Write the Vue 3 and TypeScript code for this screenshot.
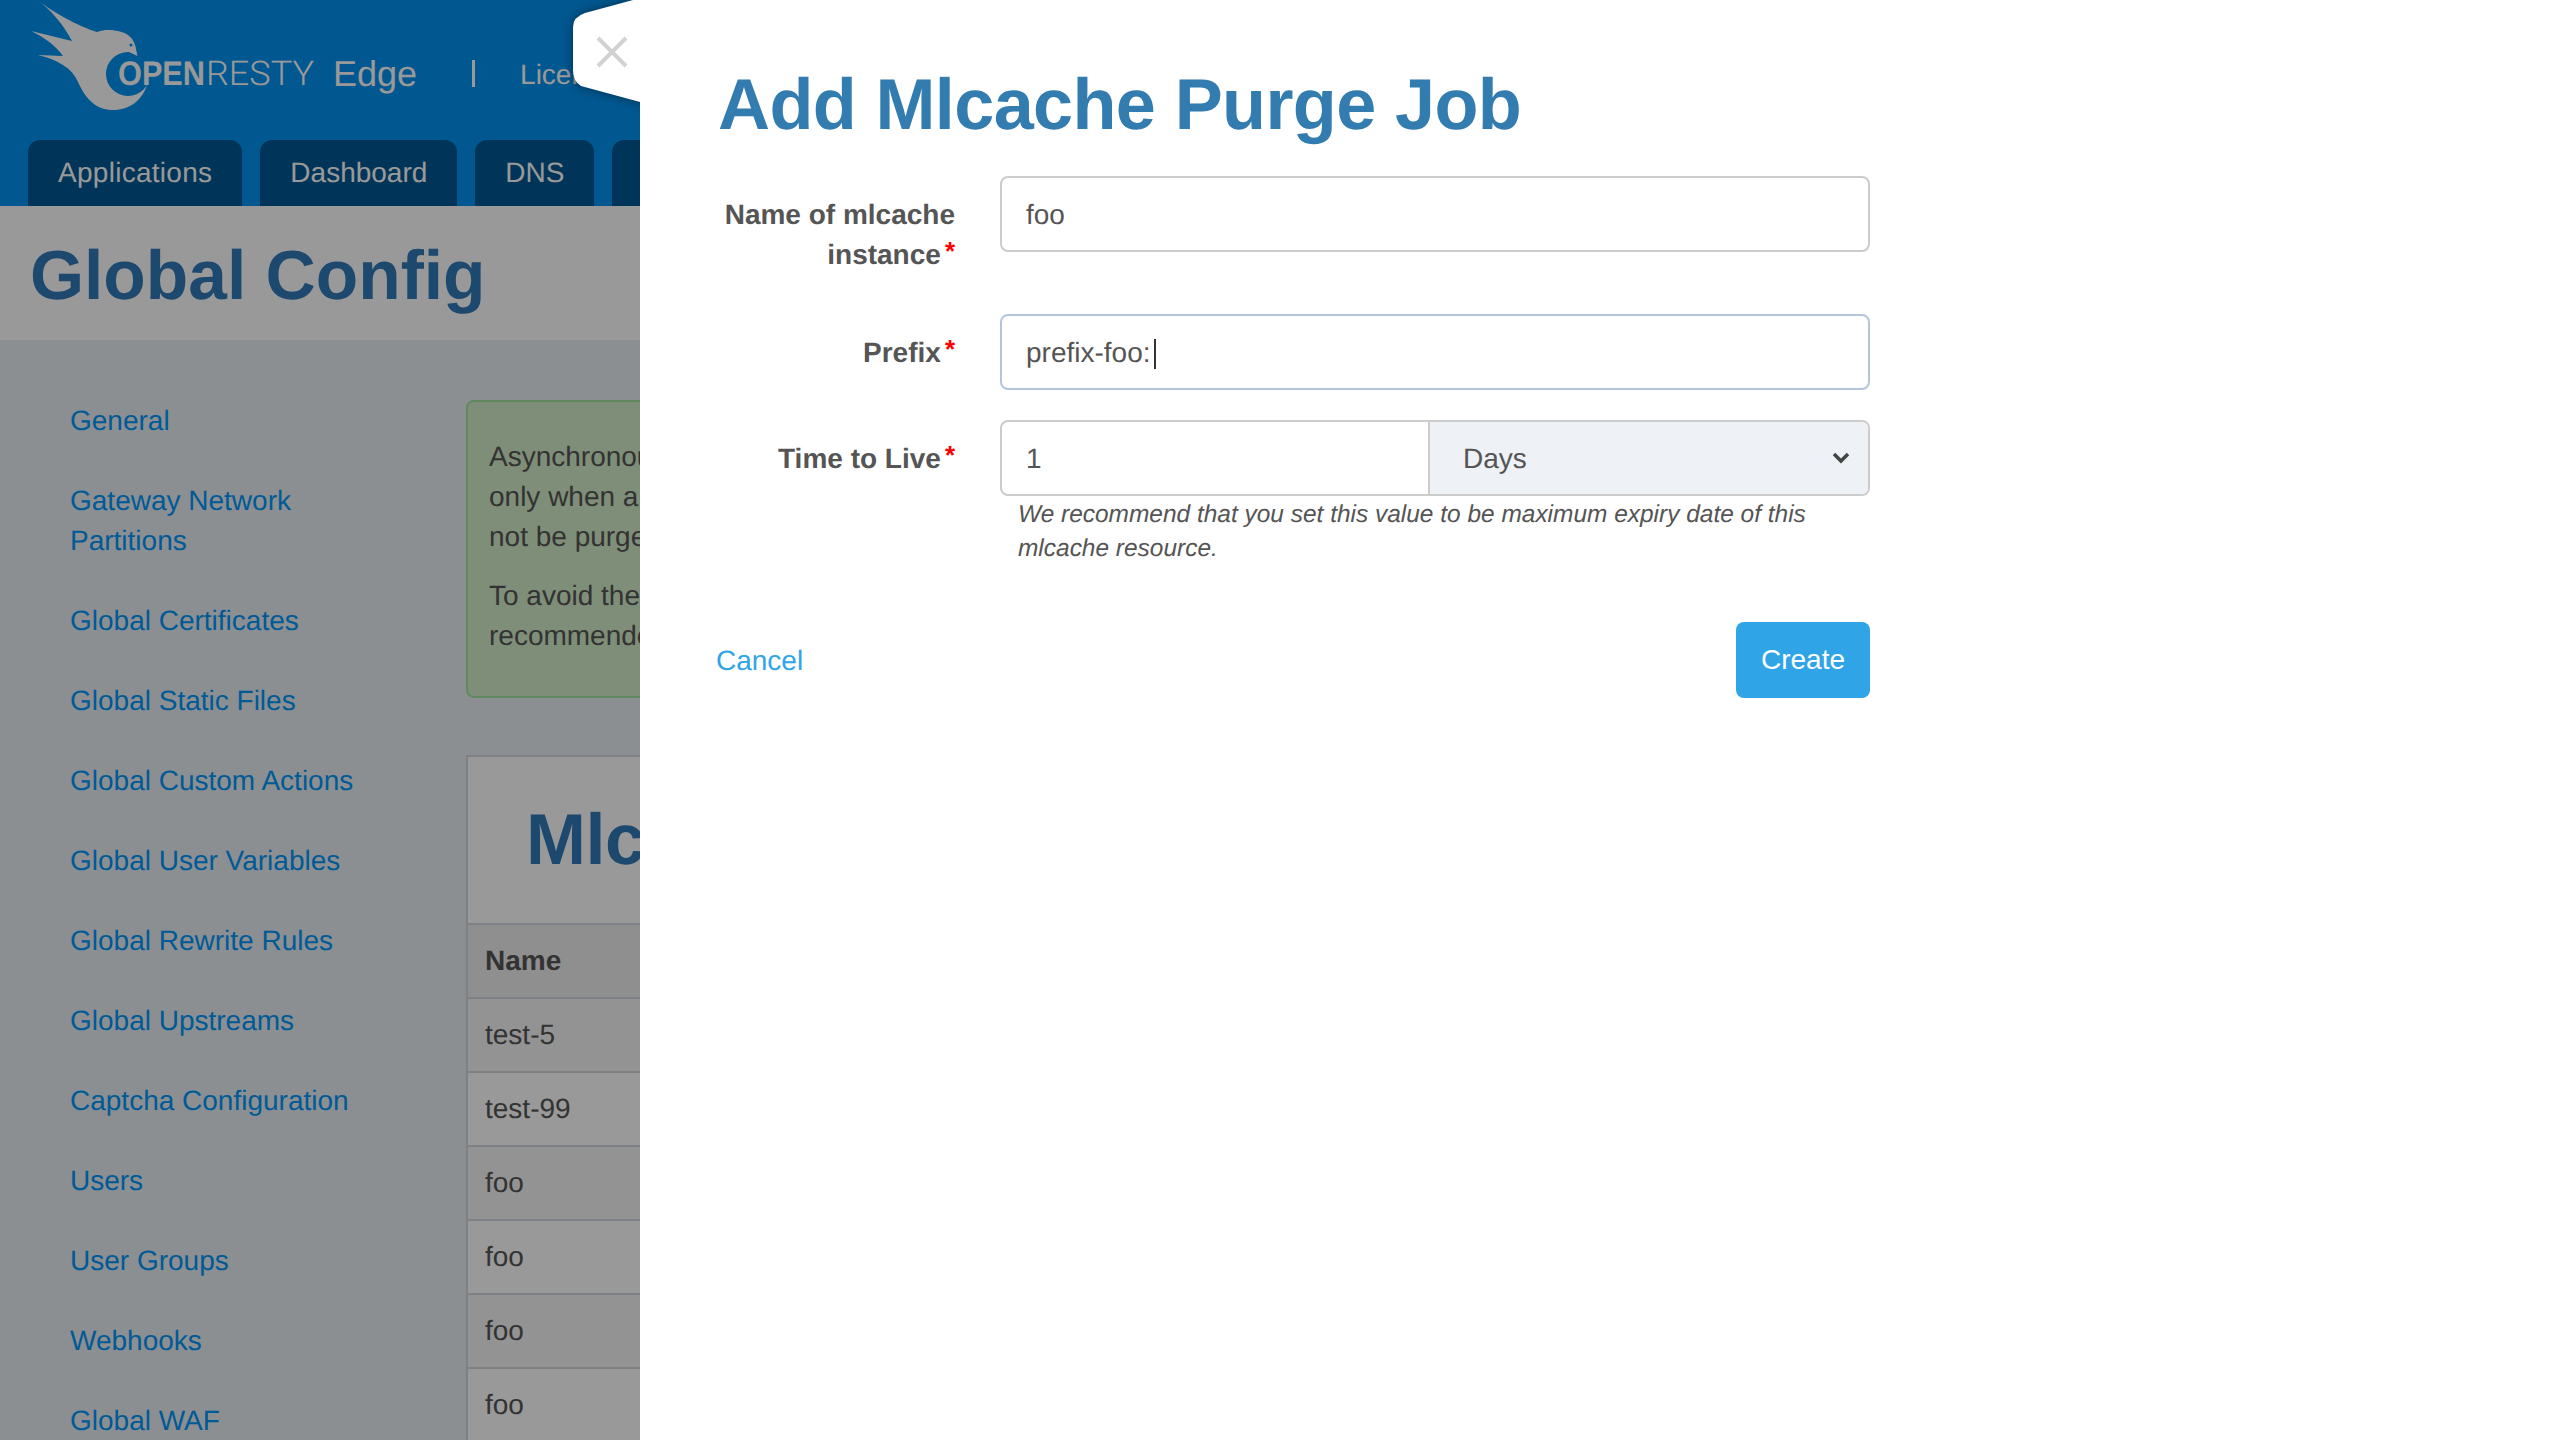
<script setup lang="ts">
interface NavItem { label: string }
const tabs: string[] = ['Applications', 'Dashboard', 'DNS', '']
const nav: NavItem[] = [
  'General', 'Gateway Network Partitions', 'Global Certificates', 'Global Static Files',
  'Global Custom Actions', 'Global User Variables', 'Global Rewrite Rules', 'Global Upstreams',
  'Captcha Configuration', 'Users', 'User Groups', 'Webhooks', 'Global WAF',
].map((label) => ({ label }))
const rows: string[] = ['test-5', 'test-99', 'foo', 'foo', 'foo', 'foo']
</script>

<template>
  <div class="page">
    <header class="topbar">
      <div class="brand">
        <svg class="logo" viewBox="0 0 330 120" width="330" height="120" aria-label="OpenResty">
          <path class="bird" d="M38 0C52 12 78 26 97 32C105 29 112 30 118 31C128 33 133 38 135 45L137 56L140 70L147 85C142 100 130 110 113 110C97 110 86 100 78 82C72 68 58 60 38 55L63 56C56 46 44 37 31 31L72 41C62 22 50 10 38 0Z" />
          <circle class="disc" cx="128" cy="74" r="22" />
          <path class="bird" d="M127 47L135 45L137.5 56L128 51.5Z" />
          <circle class="disc" cx="131" cy="45" r="1.5" />
          <text class="logo-open" x="118" y="85" textLength="87" lengthAdjust="spacingAndGlyphs">OPEN</text>
          <text class="logo-resty" x="206" y="85" textLength="108" lengthAdjust="spacingAndGlyphs">RESTY</text>
        </svg>
        <span class="edge">Edge</span>
        <span class="sep"></span>
        <span class="license">License</span>
      </div>
      <nav class="tabs">
        <a v-for="(t, i) in tabs" :key="i" class="tab">{{ t }}</a>
      </nav>
    </header>

    <section class="band"><h1>Global Config</h1></section>

    <main class="body">
      <aside class="side">
        <a v-for="n in nav" :key="n.label" class="side-link">{{ n.label }}</a>
      </aside>
      <div class="content">
        <div class="alert">
          <p>Asynchronous<br />only when a<br />not be purged</p>
          <p>To avoid the<br />recommended</p>
        </div>
        <div class="card">
          <h2>Mlcache</h2>
          <div class="th">Name</div>
          <div v-for="(r, i) in rows" :key="i" class="td" :class="{ alt: i % 2 === 1 }">{{ r }}</div>
        </div>
      </div>
    </main>

    <div class="overlay"></div>

    <div class="close">
      <svg viewBox="0 0 87 108" width="87" height="108">
        <path class="close-shape" d="M60 0L12 13Q0 17 0 27V70Q0 81 8 86L67 102L87 108V0Z" />
        <path class="close-x" d="M25 38L53 66M53 38L25 66" />
      </svg>
    </div>

    <aside class="drawer">
      <h1 class="drawer-title">Add Mlcache Purge Job</h1>
      <form class="form" @submit.prevent>
        <div class="row">
          <label class="lab">Name of mlcache instance<i class="req">*</i></label>
          <div class="field">foo</div>
        </div>
        <div class="row">
          <label class="lab">Prefix<i class="req">*</i></label>
          <div class="field focus">prefix-foo:<span class="caret"></span></div>
        </div>
        <div class="row">
          <label class="lab">Time to Live<i class="req">*</i></label>
          <div>
            <div class="group">
              <div class="g-num">1</div>
              <div class="g-sel">
                Days
                <svg class="chev" viewBox="0 0 18 12" width="18" height="12">
                  <path d="M2 2L9 9L16 2" />
                </svg>
              </div>
            </div>
            <p class="hint">We recommend that you set this value to be maximum expiry date of this mlcache resource.</p>
          </div>
        </div>
        <div class="actions">
          <a class="cancel">Cancel</a>
          <button class="create" type="submit">Create</button>
        </div>
      </form>
    </aside>
  </div>
</template>

<style>
html, body { margin: 0; background: #fff; }
</style>

<style scoped>
* { box-sizing: border-box; }
.page {
  position: relative;
  width: 2560px;
  height: 1440px;
  overflow: hidden;
  font-family: "Liberation Sans", Arial, sans-serif;
  font-size: 28px;
  line-height: 40px;
  color: #555;
  background: #e8eef3;
  text-rendering: geometricPrecision;
}
.topbar { height: 206px; background: #0391ee; display: flex; flex-direction: column; justify-content: space-between; }
.brand { display: flex; align-items: flex-start; height: 120px; position: relative; white-space: nowrap; }
.logo { flex: none; display: block; }
.bird { fill: #fff; }
.disc { fill: #0391ee; }
.logo-open { font: bold 34px "Liberation Sans", sans-serif; fill: #fff; }
.logo-resty { font: 300 34px Roboto, "Liberation Sans", sans-serif; fill: #fff; }
.edge { font-size: 36px; line-height: 40px; color: #fff; margin: 54px 0 0 3px; }
.sep { width: 3px; height: 27px; background: #fff; margin: 60px 0 0 55px; }
.license { color: #fff; font-size: 28px; margin: 55px 0 0 45px; }
.tabs { display: flex; gap: 18px; padding-left: 28px; height: 66px; }
.tab { padding: 13px 30px 0; background: #005893; color: #fff; border-radius: 12px 12px 0 0; white-space: nowrap; min-width: 118px; }
.tab:first-child { letter-spacing: .28px; }
.band { height: 134px; background: #fff; padding: 2px 0 0 30px; }
.band h1 { margin: 0; font-size: 69.5px; line-height: 134px; font-weight: bold; color: #337ab7; }
.body { display: flex; padding-top: 61px; }
.side { width: 466px; flex: none; padding: 0 90px 0 70px; display: flex; flex-direction: column; }
.side-link { color: #0096fa; padding-bottom: 40px; }
.content { width: 1800px; flex: none; margin-top: -1px; }
.alert {
  height: 298px;
  padding: 35px 21px;
  background: #d4edc9;
  border: 2px solid #9fe69f;
  border-radius: 8px;
  color: #555;
}
.alert p { margin: 0 0 19px; }
.card { margin-top: 57px; border: 2px solid #d0d7de; border-bottom: 0; background: #fff; }
.card h2 { margin: 0; height: 166px; padding: 41px 0 0 58px; font-size: 72px; line-height: 84px; color: #337ab7; font-weight: bold; letter-spacing: -.5px; }
.th, .td { height: 74px; padding: 0 17px; line-height: 72px; border-top: 2px solid #d0d7de; color: #555; }
.th { font-weight: bold; background: #eee; color: #555; }
.td { background: #f5f5f5; }
.td.alt { background: #fff; }
.overlay { position: absolute; inset: 0; background: rgba(0, 0, 0, .4); }
.close { position: absolute; left: 573px; top: 0; width: 87px; height: 108px; filter: drop-shadow(0 0 5px rgba(0, 0, 0, .45)); }
.close svg { display: block; }
.close-shape { fill: #fff; }
.close-x { fill: none; stroke: #d2d2d2; stroke-width: 4; }
.drawer {
  position: absolute;
  left: 640px;
  top: 0;
  width: 1920px;
  height: 1440px;
  background: #fff;
  padding: 0 690px 0 77px;
}
.drawer-title { margin: 0; height: 176px; padding: 63px 0 0 1px; font-size: 72px; line-height: 84px; font-weight: bold; color: #337cb0; white-space: nowrap; letter-spacing: -.62px; }
.form { display: flex; flex-direction: column; }
.row { display: grid; grid-template-columns: 238px 870px; column-gap: 45px; margin-bottom: 30px; }
.lab { display: block; padding: 19px 0 9px; text-align: right; font-weight: bold; color: #555; }
.req { color: #f00; font-style: normal; font-weight: bold; font-size: 26px; line-height: 1; margin-left: 4px; vertical-align: 4px; }
.field { height: 76px; border: 2px solid #ccc; border-radius: 8px; padding: 17px 24px 15px; color: #555; }
.field.focus { border-color: #b3c5dc; }
.caret { display: inline-block; width: 2px; height: 30px; background: #333; vertical-align: -7px; margin-left: 3px; }
.group { display: flex; height: 76px; border: 2px solid #ccc; border-radius: 8px; overflow: hidden; }
.g-num { width: 428px; padding: 17px 24px 15px; border-right: 2px solid #ccc; }
.g-sel { flex: 1; position: relative; background: #eef1f5; padding: 17px 33px 15px; }
.chev { position: absolute; right: 18px; top: 30px; fill: none; }
.chev path { stroke: #444; stroke-width: 3.5; fill: none; }
.hint { margin: 0 0 0 18px; font-style: italic; font-size: 24.46px; line-height: 34px; width: 820px; color: #555; padding-top: 2px; }
.actions { width: 1153px; display: flex; justify-content: space-between; align-items: center; padding-top: 26px; }
.cancel { color: #2fa4e7; margin: 1px 0 0 -1px; }
.create { width: 134px; height: 76px; border: 0; border-radius: 8px; background: #2fa4e7; color: #fff; font: 28px "Liberation Sans", sans-serif; padding: 0; }
</style>
